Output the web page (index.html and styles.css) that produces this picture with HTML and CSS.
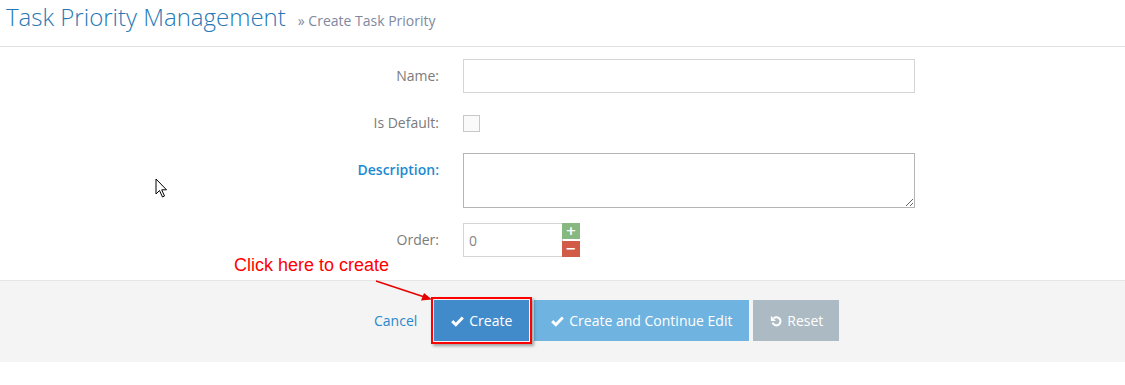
FILE: index.html
```html
<!DOCTYPE html>
<html lang="en">
<head>
    <meta charset="UTF-8">
    <title>Create Task Priority</title>
    <link rel="stylesheet" href="styles.css">
</head>
<body>
    <div class="page-header">
        <h1>Task Priority Management</h1>
        <small>&raquo; Create Task Priority</small>
    </div>

    <form class="priority-form">
        <div class="form-row">
            <label for="name">Name:</label>
            <input type="text" id="name" class="text-input">
        </div>
        <div class="form-row">
            <label for="isDefault">Is Default:</label>
            <div class="check-cell">
                <input type="checkbox" id="isDefault" class="check-input">
            </div>
        </div>
        <div class="form-row">
            <label for="description" class="label-highlight">Description:</label>
            <textarea id="description" class="text-area"></textarea>
        </div>
        <div class="form-row">
            <label for="order">Order:</label>
            <div class="spinner">
                <input type="text" id="order" class="order-input" value="0">
                <div class="spinner-buttons">
                    <span class="spin spin-up">+</span>
                    <span class="spin spin-down">&minus;</span>
                </div>
            </div>
        </div>

        <div class="form-actions">
            <a href="#" class="cancel-link">Cancel</a>
            <div class="highlight-wrap">
                <button type="button" class="btn btn-primary">
                    <svg class="icon" viewBox="0 0 14 12"><path d="M1.3 6.2 L5.2 10 L12.7 2.3" fill="none" stroke="#fff" stroke-width="3.2"/></svg>
                    Create
                </button>
                <span class="highlight-box"></span>
            </div>
            <button type="button" class="btn btn-info">
                <svg class="icon" viewBox="0 0 14 12"><path d="M1.3 6.2 L5.2 10 L12.7 2.3" fill="none" stroke="#fff" stroke-width="3.2"/></svg>
                Create and Continue Edit
            </button>
            <button type="button" class="btn btn-grey">
                <svg class="icon" viewBox="0 0 14 14"><path d="M4.3 4.3 A4.8 4.8 0 1 1 3 9.6" fill="none" stroke="#fff" stroke-width="2.4"/><polygon points="1,1.5 1,7.5 7,7.5" fill="#fff"/></svg>
                Reset
            </button>
        </div>
    </form>

    <!-- screenshot annotation -->
    <div class="note-text">Click here to create</div>
    <svg class="note-arrow" width="70" height="30" viewBox="0 0 70 30">
        <line x1="6" y1="3" x2="56" y2="19.5" stroke="#e60000" stroke-width="1.6"/>
        <polygon points="62,21.5 51,22.5 54,15" fill="#e60000"/>
    </svg>

    <svg class="mouse-cursor" width="14" height="21" viewBox="0 0 14 21">
        <path d="M1 1 L1 16 L4.5 12.5 L7.5 19 L9.5 18 L6.7 11.8 L11.5 11.8 Z" fill="#fff" stroke="#000" stroke-width="1"/>
    </svg>
</body>
</html>
```

FILE: styles.css
```css
body, html {
    margin: 0;
    padding: 0;
    font-family: "Open Sans", "Liberation Sans", Arial, sans-serif;
    font-size: 14px;
    background-color: #fff;
    color: #393939;
}

body {
    position: relative;
    min-height: 385px;
}

.page-header {
    display: flex;
    align-items: baseline;
    padding: 0 6px 12px;
    border-bottom: 1px solid #e2e2e2;
}

.page-header h1 {
    margin: 0;
    font-size: 24px;
    font-weight: 300;
    line-height: 34px;
    color: #2679b5;
}

.page-header small {
    margin-left: 12px;
    font-size: 14px;
    color: #8089a0;
}

.priority-form {
    margin: 12px 0 0;
}

.form-row {
    display: flex;
    align-items: flex-start;
    margin-bottom: 13px;
}

.form-row:nth-child(3) {
    margin-bottom: 15px;
}

.form-row:nth-child(4) {
    margin-bottom: 23px;
}

.form-row label {
    width: 439px;
    margin-right: 24px;
    padding-top: 7px;
    line-height: 20px;
    text-align: right;
    color: #7b7b7b;
}

.form-row label.label-highlight {
    color: #1c8bd0;
    font-weight: 600;
}

.text-input, .text-area, .order-input {
    box-sizing: border-box;
    border: 1px solid #d5d5d5;
    font-family: inherit;
    font-size: 14px;
    color: #858585;
    background: #fff;
    margin: 0;
    border-radius: 0;
}

.text-input {
    width: 452px;
    height: 34px;
    padding: 5px 5px;
}

.check-cell {
    height: 34px;
    display: flex;
    align-items: center;
}

.check-input {
    appearance: none;
    -webkit-appearance: none;
    width: 17px;
    height: 17px;
    margin: 0;
    border: 1px solid #c8c8c8;
    background: #fafafa;
}

.text-area {
    width: 452px;
    height: 55px;
    padding: 5px;
    border-color: #b5b5b5;
    resize: both;
}

.spinner {
    display: flex;
}

.order-input {
    width: 100px;
    height: 34px;
    padding: 5px 5px;
}

.spinner-buttons {
    display: flex;
    flex-direction: column;
    justify-content: space-between;
    width: 18px;
    height: 34px;
    margin-left: -1px;
}

.spin {
    display: flex;
    align-items: center;
    justify-content: center;
    height: 16px;
    color: #fff;
    font-family: "DejaVu Sans", sans-serif;
    font-weight: bold;
    font-size: 13px;
    line-height: 16px;
}

.spin-up {
    background: #87b87f;
}

.spin-down {
    background: #d15b47;
}

.form-actions {
    display: flex;
    align-items: center;
    gap: 4px;
    background: #f4f4f4;
    border-top: 1px solid #e5e5e5;
    padding: 19px 0 21px 374px;
}

.cancel-link {
    color: #2a87cc;
    text-decoration: none;
    margin-right: 13px;
}

.btn {
    display: flex;
    align-items: center;
    gap: 5px;
    height: 41px;
    padding: 0 16px 0 17px;
    border: none;
    font-family: inherit;
    font-size: 14px;
    color: #fff;
    cursor: pointer;
}

.btn .icon {
    width: 13px;
    height: 12px;
}

.btn-grey .icon {
    height: 13px;
}

.btn-primary {
    background: #428bca;
    width: 95px;
}

.btn-info {
    background: #6fb3e0;
    width: 215px;
    margin-left: 1px;
}

.btn-grey {
    background: #abbac3;
    width: 86px;
}

.highlight-wrap {
    position: relative;
}

.highlight-box {
    position: absolute;
    top: -3px;
    left: -3px;
    right: -3px;
    bottom: -3px;
    border: 2px solid #f00;
    box-shadow: 2px 2px 3px rgba(0, 0, 0, 0.35);
    pointer-events: none;
}

.note-text {
    position: absolute;
    left: 234px;
    top: 255px;
    font-family: "Liberation Sans", Arial, sans-serif;
    font-size: 18px;
    line-height: 20px;
    color: #f00;
}

.note-arrow {
    position: absolute;
    left: 370px;
    top: 278px;
}

.mouse-cursor {
    position: absolute;
    left: 155px;
    top: 178px;
}
```
